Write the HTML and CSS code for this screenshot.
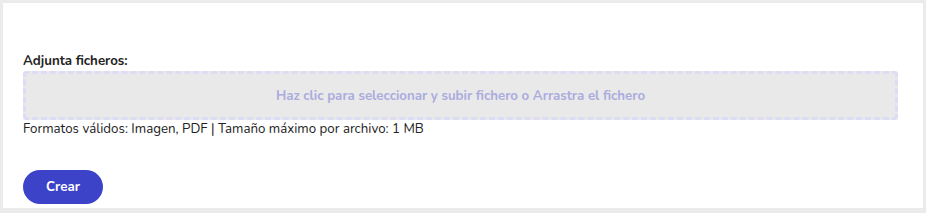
FILE: index.html
```html
<!DOCTYPE html>
<html lang="es">
<head>
    <meta charset="UTF-8">
    <meta name="viewport" content="width=device-width, initial-scale=1.0">
    <title>Adjuntar ficheros</title>
    <link rel="stylesheet" href="styles.css">
</head>
<body>
    <div class="panel">
        <form class="attach-form">
            <label class="field-label" for="fileInput">Adjunta ficheros:</label>
            <div class="dropzone">
                <span class="dropzone-text">Haz clic para seleccionar y subir fichero o Arrastra el fichero</span>
                <input type="file" id="fileInput" class="file-input" multiple>
            </div>
            <div class="hint">Formatos válidos: Imagen, PDF | Tamaño máximo por archivo: 1 MB</div>
            <button type="submit" class="btn-primary">Crear</button>
        </form>
    </div>
</body>
</html>
```

FILE: styles.css
```css
body {
    margin: 0;
    background-color: #ebebeb;
    font-family: "Nunito", "Lato", sans-serif;
    color: #222;
}
.panel {
    margin: 3px;
    height: 205px;
    background-color: white;
    box-sizing: border-box;
    padding: 49px 25px 0 20px;
}
.attach-form {
    display: flex;
    flex-direction: column;
    align-items: flex-start;
}
.field-label {
    font-size: 13.3px;
    font-weight: bold;
    line-height: 18px;
    margin-bottom: 1px;
}
.dropzone {
    align-self: stretch;
    height: 49px;
    box-sizing: border-box;
    border: 3px dashed #dcdcf5;
    border-radius: 3px;
    background-color: #e9e9e9;
    display: flex;
    align-items: center;
    justify-content: center;
    cursor: pointer;
}
.dropzone-text {
    color: #ababde;
    font-size: 13.3px;
    font-weight: bold;
}
.file-input {
    display: none;
}
.hint {
    font-size: 13.3px;
    line-height: 18px;
}
.btn-primary {
    margin-top: 32px;
    width: 80px;
    height: 34px;
    border: none;
    border-radius: 17px;
    background-color: #3c43c9;
    color: white;
    font-family: inherit;
    font-size: 13.3px;
    font-weight: bold;
    cursor: pointer;
}
```
